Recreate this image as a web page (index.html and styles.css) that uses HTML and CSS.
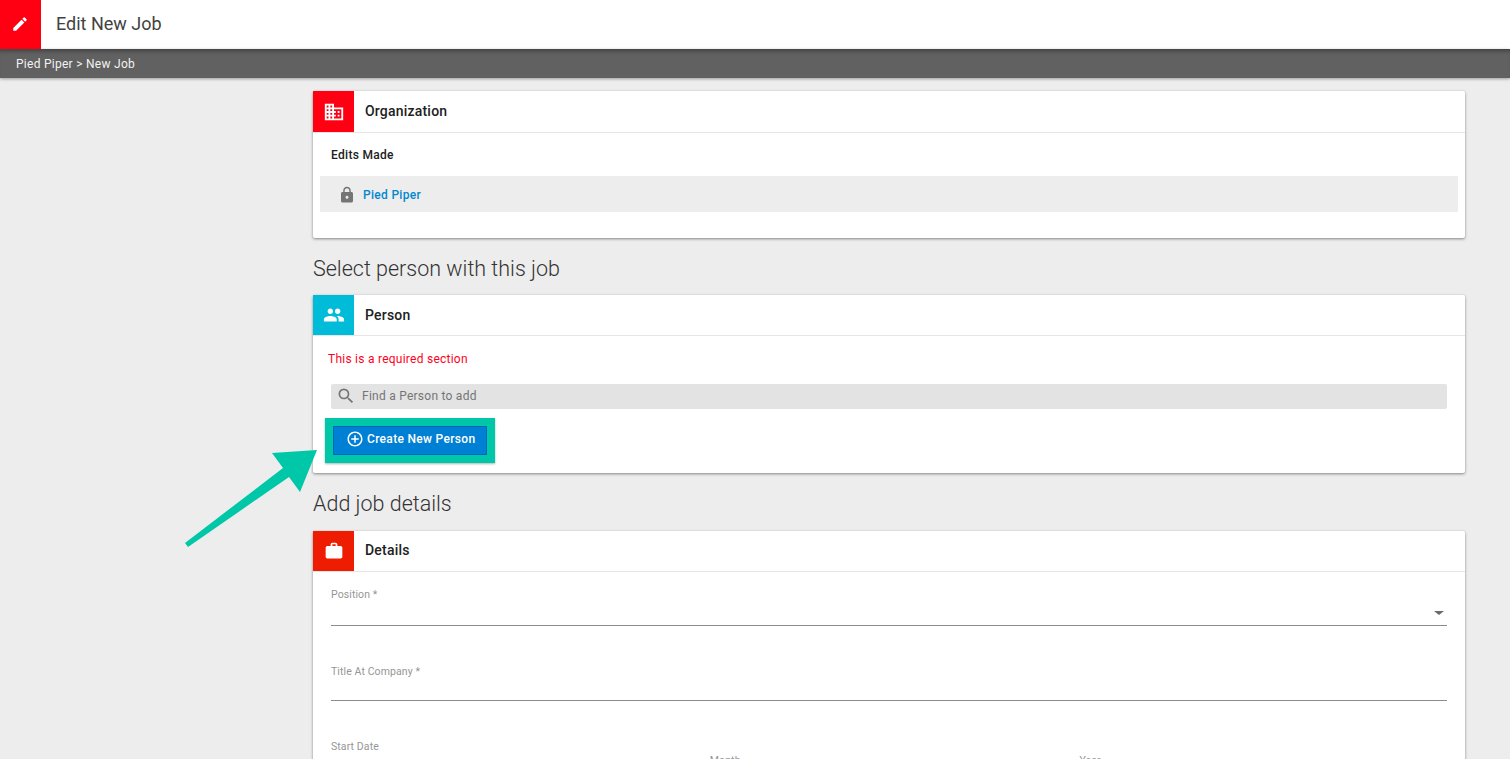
FILE: index.html
```html
<!DOCTYPE html>
<html lang="en">
<head>
<meta charset="utf-8">
<title>Edit New Job</title>
<link rel="stylesheet" href="styles.css">
</head>
<body>
<header class="topbar">
  <div class="topbar-icon">
    <svg class="icon-18" viewBox="0 0 24 24"><path fill="#fff" d="M3 17.25V21h3.75L17.81 9.94l-3.75-3.75L3 17.25zM20.71 7.04a1 1 0 0 0 0-1.41l-2.34-2.34a1 1 0 0 0-1.41 0l-1.83 1.83 3.75 3.75 1.83-1.83z"/></svg>
  </div>
  <h1 class="topbar-title">Edit New Job</h1>
</header>
<nav class="crumbs">Pied Piper &gt; New Job</nav>
<main class="content">
  <section class="card card-org">
    <div class="card-head head-tall">
      <div class="card-icon red">
        <svg class="icon-22" viewBox="0 0 24 24"><path fill="#fff" d="M12 7V3H2v18h20V7H12zM6 19H4v-2h2v2zm0-4H4v-2h2v2zm0-4H4V9h2v2zm0-4H4V5h2v2zm4 12H8v-2h2v2zm0-4H8v-2h2v2zm0-4H8V9h2v2zm0-4H8V5h2v2zm10 12h-8v-2h2v-2h-2v-2h2v-2h-2V9h8v10zm-2-8h-2v2h2v-2zm0 4h-2v2h2v-2z"/></svg>
      </div>
      <h2 class="card-title">Organization</h2>
    </div>
    <div class="org-body">
      <div class="edits-label">Edits Made</div>
      <div class="org-row">
        <svg class="icon-lock" viewBox="0 0 24 24"><path fill="#757575" d="M18 8h-1V6c0-2.76-2.24-5-5-5S7 3.24 7 6v2H6c-1.1 0-2 .9-2 2v10c0 1.1.9 2 2 2h12c1.1 0 2-.9 2-2V10c0-1.1-.9-2-2-2zm-6 9c-1.1 0-2-.9-2-2s.9-2 2-2 2 .9 2 2-.9 2-2 2zm3.1-9H8.9V6c0-1.71 1.39-3.1 3.1-3.1s3.1 1.39 3.1 3.1v2z"/></svg>
        <a class="org-link">Pied Piper</a>
      </div>
    </div>
  </section>

  <h3 class="section-title first">Select person with this job</h3>

  <section class="card card-person">
    <div class="card-head">
      <div class="card-icon cyan">
        <svg class="icon-22" viewBox="0 0 24 24"><path fill="#fff" d="M16 11c1.66 0 2.99-1.34 2.99-3S17.66 5 16 5s-3 1.34-3 3 1.34 3 3 3zm-8 0c1.66 0 2.99-1.34 2.99-3S9.66 5 8 5 5 6.34 5 8s1.34 3 3 3zm0 2c-2.33 0-7 1.17-7 3.5V19h14v-2.5C15 14.17 10.33 13 8 13zm8 0c-.29 0-.62.02-.97.05 1.16.84 1.97 1.97 1.97 3.45V19h6v-2.5c0-2.33-4.67-3.5-7-3.5z"/></svg>
      </div>
      <h2 class="card-title">Person</h2>
    </div>
    <div class="person-body">
      <p class="required">This is a required section</p>
      <div class="search">
        <svg class="icon-search" viewBox="0 0 24 24"><path fill="#757575" d="M15.5 14h-.79l-.28-.27A6.47 6.47 0 0 0 16 9.5 6.5 6.5 0 1 0 9.5 16c1.61 0 3.09-.59 4.23-1.57l.27.28v.79l5 4.99L20.49 19l-4.99-5zm-6 0C7.01 14 5 11.99 5 9.5S7.01 5 9.5 5 14 7.01 14 9.5 11.99 14 9.5 14z"/></svg>
        <span class="search-text">Find a Person to add</span>
      </div>
      <div class="highlight">
        <button class="create-btn" type="button">
          <svg class="icon-plus" viewBox="0 0 24 24"><path fill="#fff" d="M13 7h-2v4H7v2h4v4h2v-4h4v-2h-4V7zm-1-5C6.48 2 2 6.48 2 12s4.48 10 10 10 10-4.48 10-10S17.52 2 12 2zm0 18c-4.41 0-8-3.59-8-8s3.59-8 8-8 8 3.59 8 8-3.59 8-8 8z"/></svg>
          Create New Person
        </button>
      </div>
    </div>
  </section>

  <h3 class="section-title second">Add job details</h3>

  <section class="card card-details">
    <div class="card-head">
      <div class="card-icon orange">
        <svg class="icon-20" viewBox="0 0 24 24"><path fill="#fff" d="M20 6h-4V4c0-1.11-.89-2-2-2h-4c-1.11 0-2 .89-2 2v2H4c-1.11 0-2 .89-2 2v11c0 1.11.89 2 2 2h16c1.11 0 2-.89 2-2V8c0-1.11-.89-2-2-2zm-6 0h-4V4h4v2z"/></svg>
      </div>
      <h2 class="card-title">Details</h2>
    </div>
    <div class="details-body">
      <div class="field field-position">
        <label class="field-label">Position *</label>
        <span class="caret"></span>
      </div>
      <div class="field field-title">
        <label class="field-label">Title At Company *</label>
      </div>
      <div class="date-row">
        <span class="field-label">Start Date</span>
        <span class="field-label month">Month</span>
        <span class="field-label year">Year</span>
      </div>
    </div>
  </section>
</main>
<svg class="arrow" viewBox="0 0 1510 759" aria-hidden="true">
  <polygon fill="#00c7a7" points="185,543 283,468 272,453 317,450 300,492 289,477 188,547"/>
</svg>
</body>
</html>
```

FILE: styles.css
```css
* { box-sizing: border-box; }
html, body { height: 100%; }
body {
  margin: 0;
  height: 759px;
  overflow: hidden;
  background: #ededed;
  font-family: Roboto, "Liberation Sans", sans-serif;
  color: #212121;
  position: relative;
}
.topbar {
  display: flex;
  align-items: center;
  height: 49px;
  padding-bottom: 2px;
  background: #fff;
}
.topbar-icon {
  width: 41px;
  height: 49px;
  margin-bottom: -2px;
  padding: 0 2px 2px 0;
  background: #ff0012;
  display: flex;
  align-items: center;
  justify-content: center;
}
.icon-18 { width: 18px; height: 18px; display: block; }
.icon-22 { width: 22px; height: 22px; display: block; }
.icon-20 { width: 20px; height: 20px; display: block; }
.topbar-title {
  margin: 0 0 0 15px;
  font-size: 18px;
  font-weight: 400;
  color: #424242;
  letter-spacing: 0;
}
.crumbs {
  height: 29px;
  padding: 1px 0 0 16px;
  background: #616161;
  color: #f2f2f2;
  font-size: 12px;
  line-height: 29px;
  letter-spacing: 0.27px;
  box-shadow: inset 0 5px 4px -3px rgba(0,0,0,.35), 0 1px 3px rgba(0,0,0,.35);
}
.content {
  padding: 13px 45px 0 313px;
}
.card {
  background: #fff;
  border-radius: 2px;
  box-shadow: 0 1px 3px rgba(0,0,0,.45);
}
.card-head {
  display: flex;
  align-items: stretch;
  height: 41px;
  border-bottom: 1px solid #e6e6e6;
}
.head-tall { height: 42px; }
.card-icon {
  width: 41px;
  display: flex;
  align-items: center;
  justify-content: center;
}
.red { background: #ff0012; }
.cyan { background: #00bcd9; }
.orange { background: #ee1c00; }
.card-title {
  margin: 0 0 0 11px;
  font-size: 14px;
  font-weight: 500;
  line-height: 39px;
  color: #212121;
  letter-spacing: 0.2px;
}
.head-tall .card-title { line-height: 41px; }
.card-person .card-title { line-height: 41px; }
.card-org { height: 147px; }
.org-body { padding: 0 7px; }
.edits-label {
  padding: 15px 0 0 11px;
  font-size: 12px;
  font-weight: 500;
  line-height: 15px;
  height: 43px;
  letter-spacing: 0.3px;
}
.org-row {
  display: flex;
  align-items: center;
  height: 36px;
  padding-top: 1px;
  width: 1138px;
  background: #ededed;
}
.icon-lock { width: 18px; height: 18px; margin-left: 18px; display: block; }
.org-link {
  margin-left: 7px;
  font-size: 12px;
  font-weight: 500;
  color: #0288d1;
  letter-spacing: 0.3px;
}
.section-title {
  margin: 0;
  font-size: 21.5px;
  font-weight: 300;
  color: #333;
  line-height: 24px;
}
.first { padding-top: 19px; height: 57px; }
.second { padding-top: 19px; height: 58px; }
.card-person { height: 178px; }
.person-body { padding: 0 18px; }
.required {
  margin: 0 0 0 -3px;
  padding-top: 16px;
  height: 48px;
  font-size: 12px;
  line-height: 15px;
  color: #ff0022;
  letter-spacing: 0.25px;
}
.search {
  display: flex;
  align-items: center;
  height: 25px;
  background: #e3e3e3;
  border-radius: 2px;
}
.icon-search { width: 20px; height: 20px; margin-left: 5px; margin-bottom: 2px; display: block; }
.search-text {
  margin-left: 6px;
  margin-bottom: 2px;
  font-size: 12px;
  color: #757575;
  letter-spacing: 0.25px;
}
.highlight {
  display: inline-block;
  margin: 9px 0 0 -6px;
  border: 8px solid #00c7a7;
  box-shadow: 0 1px 2px rgba(0,0,0,.3);
}
.create-btn {
  display: flex;
  align-items: center;
  width: 154px;
  height: 29px;
  padding: 0 0 3px 12px;
  background: #0080d4;
  border: 1px solid #0067b8;
  color: #fff;
  font-family: inherit;
  font-size: 12px;
  font-weight: 500;
  letter-spacing: 0.32px;
}
.icon-plus { width: 18px; height: 18px; margin-right: 3px; display: block; }
.card-details { height: 300px; }
.details-body { padding: 0 18px; }
.field {
  position: relative;
  border-bottom: 1px solid #8c8c8c;
}
.field-label {
  display: block;
  font-size: 10.5px;
  color: #969696;
  letter-spacing: 0.1px;
  line-height: 13px;
}
.field-position { height: 54px; padding-top: 16px; }
.field-title { height: 75px; padding-top: 39px; }
.caret {
  position: absolute;
  right: 3px;
  top: 39px;
  width: 0;
  height: 0;
  border-left: 5px solid transparent;
  border-right: 5px solid transparent;
  border-top: 4px solid #6b6b6b;
}
.date-row {
  display: flex;
  padding-top: 39px;
}
.month { margin-left: 331px; padding-top: 14px; }
.year { margin-left: 339px; padding-top: 14px; }
.arrow {
  position: absolute;
  left: 0;
  top: 0;
  width: 1510px;
  height: 759px;
  pointer-events: none;
}
```
